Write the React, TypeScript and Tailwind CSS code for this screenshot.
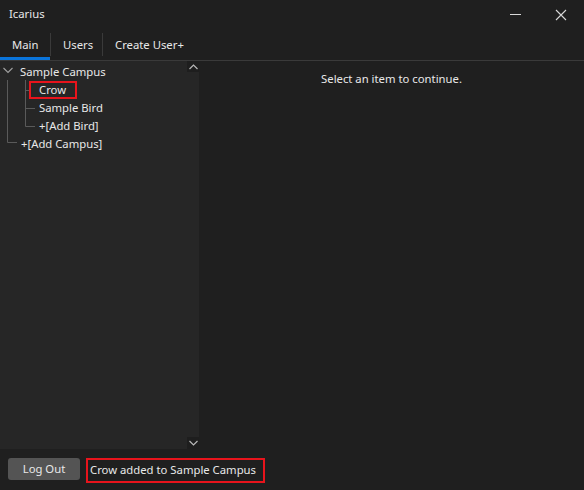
import React from "react";

const font = { fontFamily: '"Noto Sans", "Segoe UI", sans-serif' };

function Chevron({ up }: { up?: boolean }) {
  return (
    <svg width="9" height="6" viewBox="0 0 9 6" className="block">
      {up ? (
        <path d="M0.5 5 L4.5 1 L8.5 5" stroke="#b8b8b8" strokeWidth="1.2" fill="none" />
      ) : (
        <path d="M0.5 1 L4.5 5 L8.5 1" stroke="#b8b8b8" strokeWidth="1.2" fill="none" />
      )}
    </svg>
  );
}

export default function App() {
  return (
    <div
      className="w-[584px] h-[490px] bg-[#1f1f1f] flex flex-col text-[#e8e8e8] text-[11.3px] whitespace-nowrap overflow-hidden"
      style={font}
    >
      {/* title bar */}
      <div className="h-[33px] flex items-center shrink-0">
        <div className="pl-[9px] pb-[4px] flex-1">Icarius</div>
        <div className="w-[46px] h-[30px] flex items-center justify-center mb-[4px]">
          <div className="w-[11px] h-px bg-[#d8d8d8]" />
        </div>
        <div className="w-[46px] h-[30px] flex items-center justify-center mb-[4px]">
          <svg width="12" height="12" viewBox="0 0 12 12">
            <path d="M1 1 L11 11 M11 1 L1 11" stroke="#d8d8d8" strokeWidth="1.1" />
          </svg>
        </div>
      </div>

      {/* tabs */}
      <div className="h-[28px] flex shrink-0 border-b border-[#3a3a3a]">
        <div className="w-[50px] flex flex-col">
          <div className="flex-1 flex items-center pl-[12px] pt-[1px]">Main</div>
          <div className="h-[3px] bg-[#0a74da]" />
        </div>
        <div className="w-px bg-[#3a3a3a] h-[23px] self-start" />
        <div className="w-[51px] flex items-center pl-[12px] pb-[2px]">Users</div>
        <div className="w-px bg-[#3a3a3a] h-[23px] self-start" />
        <div className="flex items-center pl-[12px] pb-[2px]">Create User+</div>
      </div>

      {/* main */}
      <div className="flex-1 flex min-h-0">
        <div className="w-[199px] bg-[#262626] flex shrink-0">
          <div className="flex-1 relative pt-[2px]">
            <svg
              className="absolute left-0 top-0 pointer-events-none"
              width="187"
              height="160"
              viewBox="0 0 187 160"
            >
              <g stroke="#5a5a5a" strokeWidth="1" fill="none">
                <path d="M7.5 19 V81.5 H17" />
                <path d="M25.5 19 V65.5 H35 M25.5 29.5 H29 M25.5 47.5 H35" />
              </g>
              <path d="M3.5 7 L8 11.5 L12.5 7" stroke="#a0a0a0" strokeWidth="1.1" fill="none" />
            </svg>
            <div className="h-[18px] flex items-center pl-[20px]">Sample Campus</div>
            <div className="h-[18px] flex items-center pl-[29px]">
              <div className="h-[18px] w-[48px] border-2 border-[#e8141c] pl-[8px] flex items-center">Crow</div>
            </div>
            <div className="h-[18px] flex items-center pl-[39px]">Sample Bird</div>
            <div className="h-[18px] flex items-center pl-[39px]">+[Add Bird]</div>
            <div className="h-[18px] flex items-center pl-[21px]">+[Add Campus]</div>
          </div>
          <div className="w-[12px] flex flex-col">
            <div className="h-[11px] bg-[#1e1e1e] flex items-center justify-center">
              <Chevron up />
            </div>
            <div className="flex-1" />
            <div className="h-[12px] bg-[#1e1e1e] flex items-center justify-center">
              <Chevron />
            </div>
          </div>
        </div>
        <div className="flex-1 flex justify-center pt-[10px]">
          <div>Select an item to continue.</div>
        </div>
      </div>

      {/* bottom */}
      <div className="h-[41px] shrink-0 flex items-start pt-[9px] pl-[8px]">
        <div className="w-[72px] h-[22px] bg-[#545454] rounded-[3px] flex items-center justify-center">
          Log Out
        </div>
        <div className="ml-[6px] w-[179px] h-[25px] border-2 border-[#e8141c] flex items-center pl-[2px] pb-[1px]">
          Crow added to Sample Campus
        </div>
      </div>
    </div>
  );
}
